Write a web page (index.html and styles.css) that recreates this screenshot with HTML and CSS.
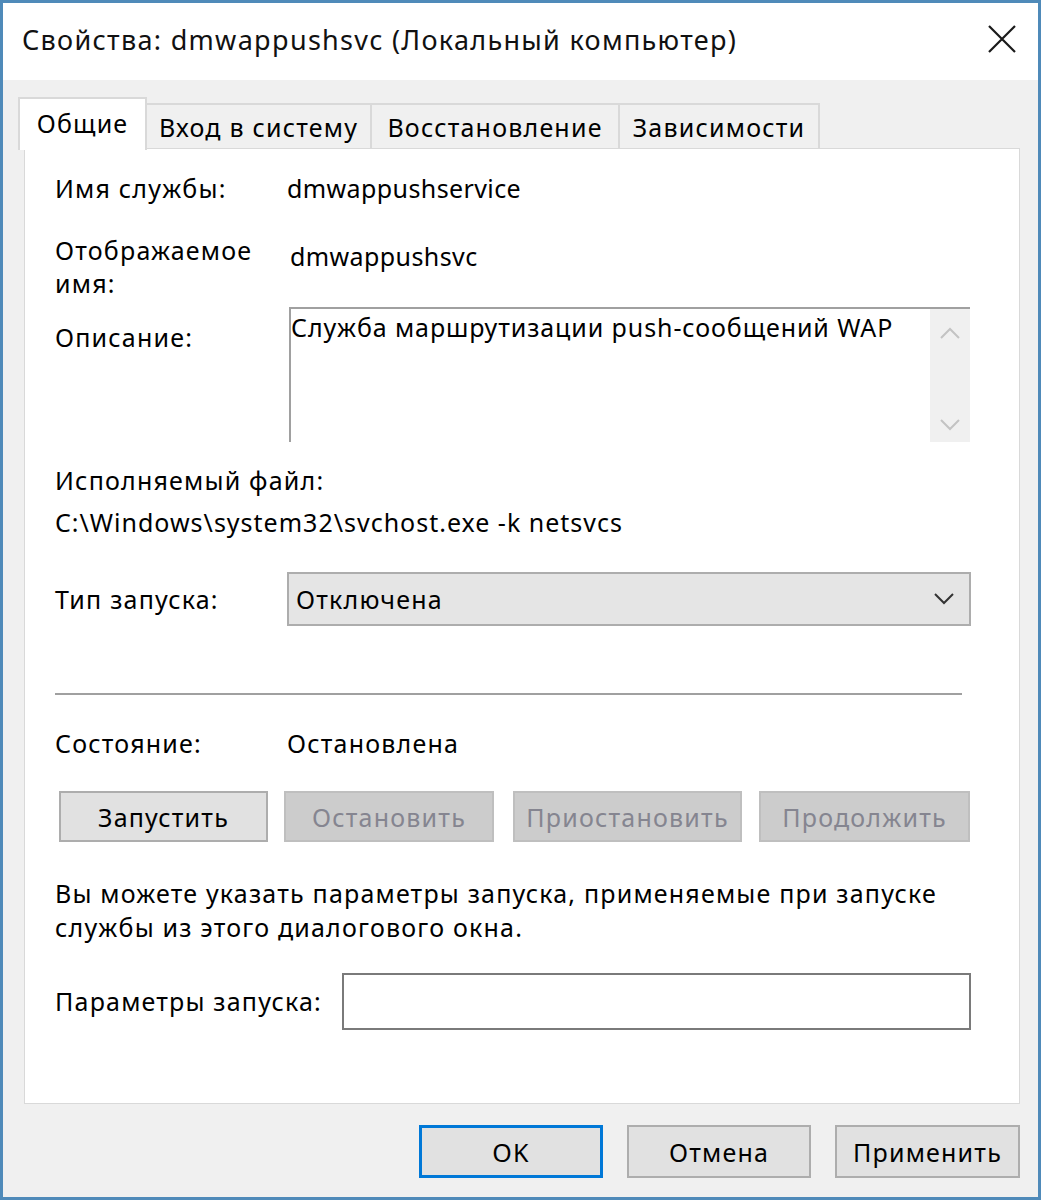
FILE: index.html
```html
<!DOCTYPE html>
<html lang="ru">
<head>
<meta charset="utf-8">
<title>Свойства: dmwappushsvc</title>
<link rel="stylesheet" href="styles.css">
</head>
<body>
<div class="window">
  <div class="titlebar">
    <span class="title">Свойства: dmwappushsvc (Локальный компьютер)</span>
    <span class="close">
      <svg width="30" height="30" viewBox="0 0 30 30"><path d="M2 2 L28 28 M28 2 L2 28" stroke="#1a1a1a" stroke-width="2.2" fill="none"/></svg>
    </span>
  </div>
  <div class="body">
    <div class="tabs">
      <div class="tab active">Общие</div>
      <div class="tab t2">Вход в систему</div>
      <div class="tab t3">Восстановление</div>
      <div class="tab t4">Зависимости</div>
    </div>
    <div class="panel">
      <div class="row r1">
        <div class="label">Имя службы:</div>
        <div class="value latin">dmwappushservice</div>
      </div>
      <div class="row r2">
        <div class="label">Отображаемое<br>имя:</div>
        <div class="value v2 latin">dmwappushsvc</div>
      </div>
      <div class="row r3">
        <div class="label l3">Описание:</div>
        <div class="desc">
          <div class="desc-text">Служба маршрутизации push-сообщений WAP</div>
          <div class="scroll">
            <svg width="22" height="14" viewBox="0 0 22 14"><path d="M2 12 L11 3 L20 12" stroke="#c3c3c3" stroke-width="2" fill="none"/></svg>
            <svg width="22" height="14" viewBox="0 0 22 14"><path d="M2 2 L11 11 L20 2" stroke="#c3c3c3" stroke-width="2" fill="none"/></svg>
          </div>
        </div>
      </div>
      <div class="line r4">Исполняемый файл:</div>
      <div class="line r5">C:\Windows\system32\svchost.exe -k netsvcs</div>
      <div class="row r6">
        <div class="label">Тип запуска:</div>
        <div class="select">
          <span>Отключена</span>
          <svg width="22" height="14" viewBox="0 0 22 14"><path d="M2 2 L11 11 L20 2" stroke="#333" stroke-width="2" fill="none"/></svg>
        </div>
      </div>
      <div class="sep"></div>
      <div class="row r7">
        <div class="label">Состояние:</div>
        <div class="value">Остановлена</div>
      </div>
      <div class="svc-buttons">
        <div class="btn b1">Запустить</div>
        <div class="btn b2 disabled">Остановить</div>
        <div class="btn b3 disabled">Приостановить</div>
        <div class="btn b4 disabled">Продолжить</div>
      </div>
      <div class="para">Вы можете указать параметры запуска, применяемые при запуске<br>службы из этого диалогового окна.</div>
      <div class="params">
        <div class="plabel">Параметры запуска:</div>
        <div class="input"></div>
      </div>
    </div>
    <div class="footer">
      <div class="btn fb ok">OK</div>
      <div class="btn fb">Отмена</div>
      <div class="btn fb">Применить</div>
    </div>
  </div>
</div>
</body>
</html>
```
FILE: styles.css
```css
* { box-sizing: border-box; }
html, body { margin: 0; padding: 0; background: #ffffff; }
body {
  font-family: "Noto Sans", "Open Sans", "Liberation Sans", sans-serif;
  font-size: 25px;
  letter-spacing: 1.2px;
  color: #000;
}
.latin { letter-spacing: 0.4px; }
.window {
  width: 1041px;
  height: 1200px;
  border: 3px solid #4f8ab9;
  display: flex;
  flex-direction: column;
  background: #f0f0f0;
}
.titlebar {
  height: 77px;
  background: #ffffff;
  display: flex;
  align-items: center;
  justify-content: space-between;
  padding: 0 21px 0 19px;
}
.title { font-size: 27px; letter-spacing: 1.3px; color: #111; margin-top: -4px; }
.close { display: flex; margin-top: -6px; }
.body {
  flex: 1;
  padding: 17px 18px 0 21px;
  display: flex;
  flex-direction: column;
}
.tabs {
  display: flex;
  align-items: flex-end;
  height: 51px;
  margin-left: -6px;
  position: relative;
  z-index: 1;
}
.tab {
  height: 45px;
  border: 2px solid #d9d9d9;
  border-bottom: none;
  border-left: none;
  background: #f0f0f0;
  display: flex;
  align-items: center;
  justify-content: center;
  padding-top: 0;
}
.tab.active {
  width: 129px;
  height: 53px;
  margin-bottom: -2px;
  background: #ffffff;
  border-left: 2px solid #d9d9d9;
  padding-top: 0;
  padding-bottom: 4px;
}
.t2 { width: 225px; }
.t3 { width: 248px; }
.t4 { width: 200px; }
.panel {
  height: 956px;
  background: #ffffff;
  border: 1px solid #d9d9d9;
  padding: 0 0 0 30px;
  display: flex;
  flex-direction: column;
}
.row { display: flex; }
.label { width: 232px; line-height: 33px; flex-shrink: 0; }
.value { line-height: 33px; }
.line { line-height: 33px; }
.r1 { margin-top: 23px; }
.r2 { margin-top: 29px; }
.v2 { padding-top: 6px; padding-left: 3px; }
.r3 { margin-top: 7px; }
.l3 { padding-top: 14px; }
.desc {
  width: 681px;
  height: 135px;
  margin-left: 2px;
  border-top: 2px solid #a0a0a0;
  border-left: 2px solid #a0a0a0;
  display: flex;
  justify-content: space-between;
}
.desc-text { line-height: 33px; padding-top: 2px; letter-spacing: 0.9px; }
.scroll {
  width: 40px;
  background: #f0f0f0;
  display: flex;
  flex-direction: column;
  justify-content: space-between;
  align-items: center;
  padding: 17px 0 10px;
}
.r4 { margin-top: 22px; }
.r5 { margin-top: 9px; letter-spacing: 1px; }
.r6 { margin-top: 33px; align-items: center; }
.select {
  width: 684px;
  height: 54px;
  background: #e5e5e5;
  border: 2px solid #adadad;
  display: flex;
  align-items: center;
  justify-content: space-between;
  padding: 0 14px 0 7px;
}
.sep {
  margin-top: 67px;
  width: 907px;
  height: 2px;
  background: #a0a0a0;
}
.r7 { margin-top: 32px; }
.svc-buttons {
  margin-top: 31px;
  display: flex;
  padding-left: 4px;
}
.btn {
  height: 51px;
  background: #e1e1e1;
  border: 2px solid #adadad;
  display: flex;
  align-items: center;
  justify-content: center;
}
.btn.disabled {
  background: #cccccc;
  border-color: #bfbfbf;
  color: #858590;
}
.b1 { width: 209px; }
.b2 { width: 210px; margin-left: 16px; }
.b3 { width: 229px; margin-left: 19px; }
.b4 { width: 211px; margin-left: 17px; }
.para { margin-top: 34px; line-height: 34px; }
.params {
  margin-top: 29px;
  display: flex;
  align-items: center;
}
.plabel { width: 287px; line-height: 33px; }
.input {
  width: 629px;
  height: 57px;
  border: 2px solid #7a7a7a;
  background: #fff;
}
.footer {
  margin-top: 21px;
  display: flex;
  justify-content: flex-end;
  gap: 24px;
}
.fb { width: 184px; height: 53px; }
.fb:last-child { width: 185px; }
.ok { border: 3px solid #0078d7; }
```
